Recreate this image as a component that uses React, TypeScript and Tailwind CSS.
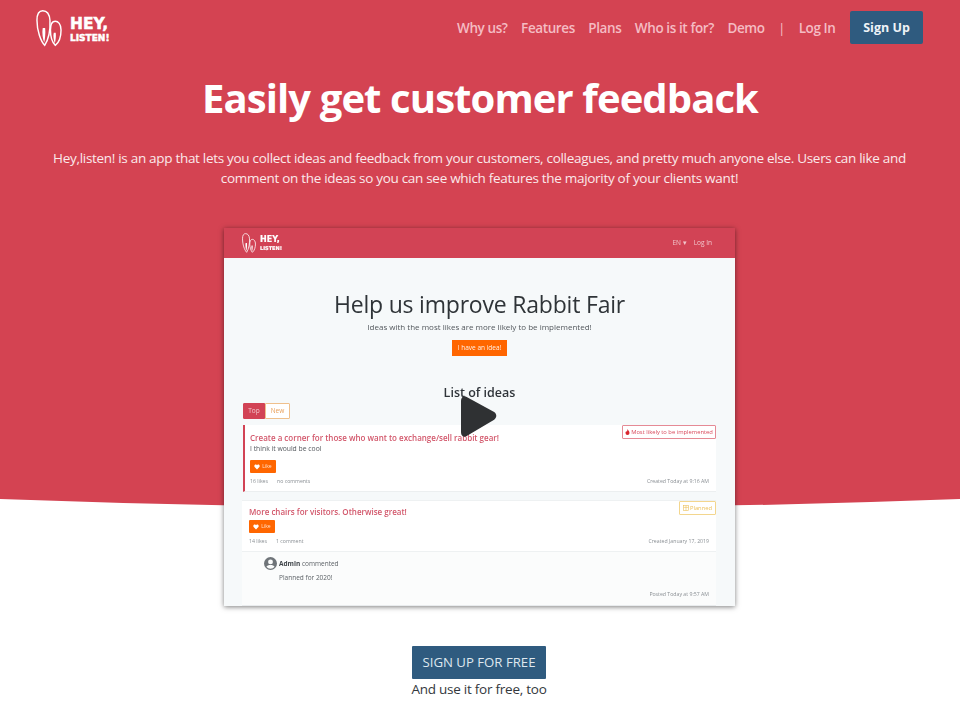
const sans = "font-['Open_Sans','Noto_Sans',sans-serif]";

function Ears({ className }: { className: string }) {
  return (
    <svg className={className} viewBox="0 0 27 38" fill="none" stroke="white" strokeWidth="1.5">
      <path d="M9 37C5 33 1 22 1 11 1 4 3 1 7 1s7 3 7.500 10c.4 8-1 19-5.500 26Z" />
      <path d="M20 37c-3-3-5-10-5-16 0-6 2-9 5-9s6 3 6 9c0 6-2 13-6 16Z" />
      <path d="M8.500 34c-1.500-4-2.500-10-1.500-15h2.500c.5 5 0 11-1 15Z" fill="white" stroke="none" />
      <path d="M19.500 35c-1-3-2-8-1-11h2c.4 3 0 8-1 11Z" fill="white" stroke="none" />
    </svg>
  );
}

function Logo({ small }: { small?: boolean }) {
  if (small) {
    return (
      <div className="flex items-center gap-[4px]">
        <Ears className="h-[20px] w-[14px]" />
        <div className="font-['DejaVu_Sans'] font-black text-white [-webkit-text-stroke:0.2px_white]">
          <div className="text-[8px] leading-[10px]">HEY,</div>
          <div className="text-[5px] leading-[6px]">LISTEN!</div>
        </div>
      </div>
    );
  }
  return (
    <div className="flex items-center gap-[8px]">
      <Ears className="h-[38px] w-[26px]" />
      <div className="font-['DejaVu_Sans'] font-black text-white mt-[3px] [-webkit-text-stroke:0.5px_white]">
        <div className="text-[15.500px] leading-[18px]">HEY,</div>
        <div className="text-[9px] leading-[10.500px]">LISTEN!</div>
      </div>
    </div>
  );
}

function Like() {
  return (
    <div className="flex h-[13px] w-[26px] items-center justify-center gap-[2px] rounded-[1px] bg-[#ff6600] text-[5px] text-white/80">
      <svg className="h-[6px] w-[6px]" viewBox="0 0 24 24" fill="white">
        <path d="M12 22 2.500 12C-1 7 3 1 8 2c2 .4 3 1.500 4 3 1-1.500 2-2.600 4-3 5-1 9 5 5.500 10Z" />
      </svg>
      Like
    </div>
  );
}

function VideoPoster() {
  return (
    <div className="relative ml-[224px] w-[511px] h-[378px] bg-[#f6f9fa] shadow-[0_1px_5px_rgba(0,0,0,0.5)] text-[#3a3f44] overflow-hidden">
      <div className="blur-[0.3px]">
        <div className="flex h-[30px] items-center justify-between bg-[#d24355] pl-[18px] pr-[23px]">
          <Logo small />
          <div className="flex gap-[7px] text-[6.500px] text-white/70">
            <span>EN ▾</span>
            <span>Log In</span>
          </div>
        </div>

        <div className="flex flex-col items-center pt-[31px]">
          <div className="text-[23px] tracking-[-0.2px] leading-[30px] text-[#2f3438]">Help us improve Rabbit Fair</div>
          <div className="mt-[2px] text-[8px] leading-[12px] text-[#53585d]">Ideas with the most likes are more likely to be implemented!</div>
          <div className="mt-[7px] flex h-[16px] w-[55px] items-center justify-center bg-[#ff6600] text-[6.500px] text-white/90">I have an idea!</div>
          <div className="mt-[29px] text-[12.500px] leading-[16px] font-semibold text-[#30353a]">List of ideas</div>
        </div>

        <div className="ml-[19px] mt-[2px] flex h-[16px] w-[47px] text-[6.500px] leading-[14px]">
          <div className="w-[22px] rounded-l-[1px] bg-[#d24355] text-center text-white/70 border border-[#d24355]">Top</div>
          <div className="w-[25px] rounded-r-[1px] bg-white text-center text-[#e8a05a] border border-[#efc08c]">New</div>
        </div>

        <div className="ml-[19px] mr-[19px] mt-[6px] flex h-[67px] flex-col border-l-2 border-l-[#d24355] border-b border-b-[#eceff0] bg-white pl-[5px] pr-[7px] pt-[7px]">
          <div className="relative">
            <div className="text-[8px] leading-[12px] font-semibold text-[#d2566a]">Create a corner for those who want to exchange/sell rabbit gear!</div>
            <div className="absolute -right-[7px] -top-[7px] flex h-[14px] w-[94px] items-center justify-center gap-[1px] rounded-[1px] border border-[#e58a95] text-[5.800px] text-[#d8485a]">
              <svg className="h-[6px] w-[5px]" viewBox="0 0 10 12" fill="#d9262f"><path d="M5 0c1 3 4 4 4 8a4 4 0 0 1-8 0c0-2 1-3 2-4 0 1 .5 1.500 1 1.500C4.500 4 4.500 2 5 0Z" /></svg>
              Most likely to be implemented
            </div>
          </div>
          <div className="text-[6.800px] leading-[10px] text-[#55595e]">I think it would be cool</div>
          <div className="mt-[6px]"><Like /></div>
          <div className="mt-[4px] flex justify-between text-[5.200px] leading-[9px] text-[#8a8f94]">
            <div className="flex gap-[9px]"><span>16 likes</span><span>no comments</span></div>
            <span>Created Today at 9:16 AM</span>
          </div>
        </div>

        <div className="ml-[18px] mr-[19px] mt-[8px] flex h-[52px] flex-col border-y border-[#eef1f2] bg-white pl-[7px] pr-[7px] pt-[5px]">
          <div className="relative">
            <div className="text-[8px] leading-[11px] font-semibold text-[#d2566a]">More chairs for visitors. Otherwise great!</div>
            <div className="absolute -right-[7px] -top-[5px] flex h-[14px] w-[37px] items-center justify-center gap-[1px] rounded-[1px] border border-[#f3d68e] text-[5.800px] text-[#ecc05c]">
              <svg className="h-[6px] w-[6px]" viewBox="0 0 10 10" fill="none" stroke="#ecc05c"><rect x="1" y="1" width="8" height="8" /><path d="M1 4h8M5 1v8" /></svg>
              Planned
            </div>
          </div>
          <div className="mt-[3px]"><Like /></div>
          <div className="mt-[4px] flex justify-between text-[5.200px] leading-[9px] text-[#8a8f94]">
            <div className="flex gap-[9px]"><span>14 likes</span><span>1 comment</span></div>
            <span>Created January 17, 2019</span>
          </div>
        </div>

        <div className="ml-[18px] mr-[19px] h-[54px] border-b border-[#e9ecee] bg-[#fbfcfc] pl-[22px] pr-[7px] pt-[5px]">
          <div className="flex items-center gap-[2px]">
            <svg className="h-[13px] w-[13px]" viewBox="0 0 24 24" fill="#6f7479">
              <path d="M12 0a12 12 0 1 0 0 24 12 12 0 0 0 0-24Zm0 4.500a4.500 4.500 0 1 1 0 9 4.500 4.500 0 0 1 0-9Zm0 17a9.500 9.500 0 0 1-7.500-3.700c1-2 4-3 7.500-3s6.500 1 7.500 3A9.500 9.500 0 0 1 12 21.500Z" />
            </svg>
            <div className="text-[6.500px] text-[#5d6267]"><span className="font-bold text-[#3f4449]">Admin</span> commented</div>
          </div>
          <div className="ml-[15px] mt-[3px] text-[6.500px] leading-[10px] text-[#5d6267]">Planned for 2020!</div>
          <div className="mt-[7px] text-right text-[5.200px] leading-[9px] text-[#8a8f94]">Posted Today at 9:57 AM</div>
        </div>
      </div>

      <svg className="absolute left-[237px] top-[168px] h-[41px] w-[36px]" viewBox="0 0 38 43" fill="#2f3133">
        <path d="M0 5C0 1 3-1 6 .8l29 16c3 2 3 6 0 8L6 42.200C3 44 0 42 0 38Z" />
      </svg>
    </div>
  );
}

export default function App() {
  return (
    <div className={`relative min-h-[705px] overflow-hidden bg-white ${sans}`}>
      {/* red hero backdrop with curved bottom edge */}
      <svg className="absolute left-0 top-0 h-[510px] w-[960px]" viewBox="0 0 960 510" preserveAspectRatio="none">
        <path d="M0 0H960V499Q480 517 0 499Z" fill="#d44352" />
      </svg>

      <div className="relative">
        <header className="flex h-[55px] items-center justify-between pl-[36px] pr-[37px]">
          <Logo />
          <nav className="flex items-center gap-[13.500px] text-[13.500px] tracking-[-0.4px] font-semibold text-[#f4bcc3]">
            <a className="pt-[2px]">Why us?</a>
            <a className="pt-[2px]">Features</a>
            <a className="pt-[2px]">Plans</a>
            <a className="pt-[2px]">Who is it for?</a>
            <a className="pt-[2px]">Demo</a>
            <span className="pt-[2px] font-normal">|</span>
            <a className="pt-[2px]">Log In</a>
            <a className="ml-px flex h-[33px] w-[73px] items-center justify-center rounded-[2px] bg-[#2f5b7f] pt-[2px] text-[12.500px] tracking-normal font-bold text-[#eef3f7]">Sign Up</a>
          </nav>
        </header>

        <h1 className="mt-[14px] text-center text-[40px] tracking-[-0.9px] leading-[58px] font-bold text-white">Easily get customer feedback</h1>

        <p className="mx-auto mt-[21px] w-[870px] pr-[1px] text-center text-[13.500px] tracking-[-0.3px] leading-[20px] text-[#fbe9eb]">
          Hey,listen! is an app that lets you collect ideas and feedback from your customers, colleagues, and pretty much anyone else. Users can like and comment on the ideas so you can see which features the majority of your clients want!
        </p>

        <div className="mt-[40px]">
          <VideoPoster />
        </div>

        <div className="mt-[40px] flex flex-col items-center pr-[2px]">
          <a className="flex h-[33px] w-[134px] items-center justify-center rounded-[1px] bg-[#2f5b7f] text-[13.200px] text-[#dfe8ef]">SIGN UP FOR FREE</a>
          <div className="text-[13.500px] tracking-[-0.25px] leading-[20px] text-[#33383c]">And use it for free, too</div>
        </div>
      </div>
    </div>
  );
}
